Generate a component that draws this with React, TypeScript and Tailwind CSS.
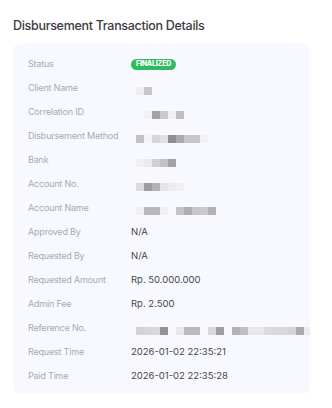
import React from "react";

// Masked values are drawn as rows of 8px grey squares (pixelated in the source)
type Masked = { offset: number; cells: string[] };

type Row = {
  label: string;
  value?: string;
  masked?: Masked;
  badge?: string;
};

const rows: Row[] = [
  { label: "Status", badge: "FINALIZED" },
  { label: "Client Name", masked: { offset: 5, cells: ["#efeff3", "#c6c6cb"] } },
  {
    label: "Correlation ID",
    masked: { offset: 13, cells: ["#f3f3f7", "#a1a1a7", "#c9c9ce", "#f0f0f4", "#bdbdc2"] },
  },
  {
    label: "Disbursement Method",
    masked: {
      offset: 5,
      cells: ["#c1c1c6", "#f4f4f8", "#d5d5da", "#e0e0e5", "#8e8e93", "#a9a9ae", "#c5c5ca", "#c5c5ca", "#f3f3f7"],
    },
  },
  { label: "Bank", masked: { offset: 5, cells: ["#f0f0f4", "#eaeaef", "#cfcfd4", "#c1c1c6", "#a1a1a6"] } },
  {
    label: "Account No.",
    masked: { offset: 5, cells: ["#dcdce1", "#9b9ba0", "#b1b1b6", "#e4e4e9", "#ececf0", "#f1f1f5"] },
  },
  {
    label: "Account Name",
    masked: {
      offset: 5,
      cells: ["#f0f0f4", "#b8b8bd", "#b8b8bd", "#f1f1f5", "transparent", "#c4c4c9", "#adadb2", "#c5c5ca", "#c9c9ce", "#b1b1b6"],
    },
  },
  { label: "Approved By", value: "N/A" },
  { label: "Requested By", value: "N/A" },
  { label: "Requested Amount", value: "Rp. 50.000.000" },
  { label: "Admin Fee", value: "Rp. 2.500" },
  {
    label: "Reference No.",
    masked: {
      offset: 5,
      cells: [
        "#d1d1d6", "#d5d5da", "#d8d8dd", "#919196", "transparent", "#e8e8ec", "#b9b9be", "#b9b9be",
        "transparent", "#d8d8dd", "#9d9da2", "transparent", "#b1b1b6", "#bdbdc2", "#e8e8ec", "#e8e8ec",
        "#dcdce1", "#d8d8dd", "#d8d8dd", "#d4d4d9", "#a9a9ae", "#ececf0",
      ],
    },
  },
  { label: "Request Time", value: "2026-01-02 22:35:21" },
  { label: "Paid Time", value: "2026-01-02 22:35:28" },
];

function MaskedValue({ masked }: { masked: Masked }) {
  return (
    <div className="flex mt-[6px]" style={{ paddingLeft: masked.offset }}>
      {masked.cells.map((c, i) => (
        <span key={i} className="block w-[8px] h-[8px] shrink-0" style={{ backgroundColor: c }} />
      ))}
    </div>
  );
}

export default function App() {
  return (
    <div className="w-[332px] h-[408px] bg-white pt-[17px] px-[13px] font-['Inter',sans-serif]">
      <h2 className="text-[12.5px] leading-[18px] font-medium text-[#3b3b40] tracking-[-0.3px]">
        Disbursement Transaction Details
      </h2>

      {/* Detail card */}
      <div className="mt-[8px] w-[297px] bg-[#f8f9fe] rounded-[8px] pl-[15px] pt-[9px] pb-[6px] overflow-hidden">
        {rows.map((row) => (
          <div key={row.label} className="flex items-center h-[24px]">
            <div className="w-[103px] shrink-0 text-[9px] tracking-[-0.2px] text-[#a7aab2]">{row.label}</div>
            {row.badge && (
              <span className="inline-flex items-center h-[11px] px-[5px] rounded-full bg-[#2dbd5e] text-white text-[7px] font-extrabold tracking-[-0.2px]">
                {row.badge}
              </span>
            )}
            {row.value && <div className="text-[9.5px] text-[#45464b]">{row.value}</div>}
            {row.masked && <MaskedValue masked={row.masked} />}
          </div>
        ))}
      </div>
    </div>
  );
}
